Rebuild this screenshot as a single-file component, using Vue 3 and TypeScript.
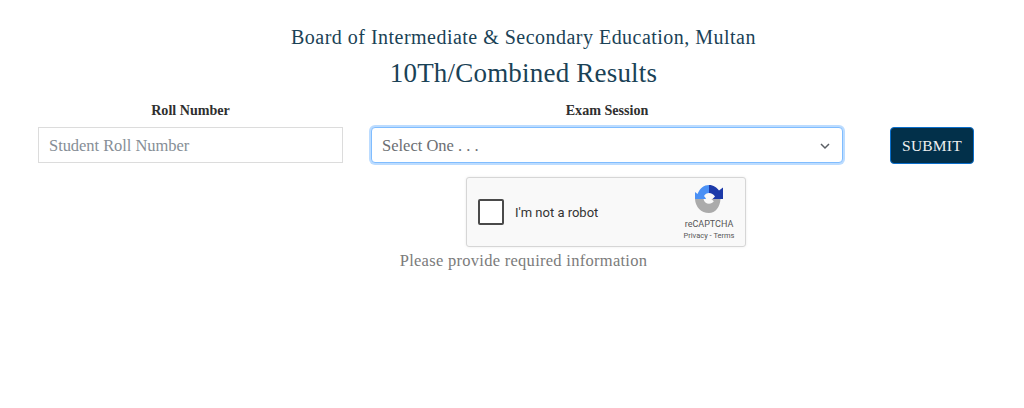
<script setup lang="ts">
const title: string = 'Board of Intermediate & Secondary Education, Multan'
const subtitle: string = '10Th/Combined Results'
</script>

<template>
  <main class="page">
    <header class="head">
      <div class="title">{{ title }}</div>
      <h1 class="subtitle">{{ subtitle }}</h1>
    </header>
    <form class="row" @submit.prevent>
      <div class="col roll">
        <label class="label">Roll Number</label>
        <div class="input placeholder">Student Roll Number</div>
      </div>
      <div class="col session">
        <label class="label">Exam Session</label>
        <div class="input select">
          <span>Select One . . .</span>
          <svg class="chev" width="10" height="7" viewBox="0 0 10 7"><path d="M1 1l4 4 4-4" fill="none" stroke="#5a5f64" stroke-width="1.500" /></svg>
        </div>
      </div>
      <button class="submit" type="submit">SUBMIT</button>
    </form>
    <div class="captcha-wrap">
      <div class="captcha">
        <div class="check"></div>
        <div class="robot">I'm not a robot</div>
        <div class="brand">
          <svg class="logo" width="30" height="30" viewBox="0 0 30 30">
            <path d="M1 15V8l2.500 2C6 4 10 1 15 1v8c-2 0-4 1-5 3l2 2.500-.5.500z" fill="#4a90f5" />
            <path d="M15 1c4.500 0 8 2.500 10 5.500l4-3V15H18.500l2.500-2.500C19.500 10.500 17.500 9 15 9z" fill="#1c3aa9" />
            <path d="M1 15h8.500c.5 2.800 2.800 4.800 5.500 4.800 2.200 0 3.800-1 4.800-2.500L17.300 15H26.500c-.5 8-5 14-11.500 14C7 29 1.500 23 1 15z" fill="#ababab" />
          </svg>
          <div class="rc">reCAPTCHA</div>
          <div class="terms">Privacy - Terms</div>
        </div>
      </div>
    </div>
    <p class="notice">Please provide required information</p>
  </main>
</template>

<style scoped>
.page {
  width: 1024px;
  height: 408px;
  box-sizing: border-box;
  background: #fff;
  padding-top: 25px;
  font-family: "Liberation Serif", "Times New Roman", serif;
  overflow: hidden;
}
.head {
  padding-left: 23px;
  text-align: center;
  color: #1a4256;
}
.title {
  font-size: 20px;
  line-height: 24px;
  letter-spacing: 0.48px;
}
.subtitle {
  margin: 8px 0 0;
  font-size: 27px;
  line-height: 32px;
  font-weight: 400;
  letter-spacing: 0.2px;
}
.row {
  display: flex;
  align-items: flex-start;
  margin-top: 12px;
  padding-left: 38px;
}
.col {
  display: flex;
  flex-direction: column;
}
.roll { width: 305px; }
.session { width: 472px; margin-left: 28px; }
.label {
  height: 26px;
  line-height: 18px;
  text-align: center;
  font-size: 14.1px;
  font-weight: 700;
  color: #2f2f2f;
}
.input {
  box-sizing: border-box;
  height: 36px;
  padding-top: 2px;
  display: flex;
  align-items: center;
  font-size: 16.500px;
  background: #fff;
}
.placeholder {
  padding-left: 10px;
  border: 1px solid #dcdcdc;
  color: #868e96;
  letter-spacing: -0.05px;
}
.select {
  justify-content: space-between;
  padding-right: 12px;
  padding-left: 10px;
  border: 1px solid #80bdff;
  border-radius: 4px;
  box-shadow: 0 0 0 2px #bcdcff;
  color: #6c6f73;
}
.submit {
  box-sizing: border-box;
  width: 84px;
  height: 37px;
  margin-top: 26px;
  margin-left: 47px;
  background: #02304a;
  border: 1px solid #0a6ecb;
  border-radius: 4px;
  color: #f0f0f0;
  font-family: inherit;
  font-size: 15.500px;
  letter-spacing: 0.2px;
  padding: 0;
}
.captcha-wrap {
  display: flex;
  margin-top: 13px;
  padding-left: 466px;
}
.captcha {
  box-sizing: border-box;
  width: 280px;
  height: 70px;
  display: flex;
  align-items: center;
  background: #f9f9f9;
  border: 1px solid #d6d6d6;
  border-radius: 3px;
  box-shadow: 0 0 3px rgba(0, 0, 0, 0.08);
  font-family: Roboto, "Liberation Sans", sans-serif;
}
.check {
  box-sizing: border-box;
  width: 26px;
  height: 26px;
  margin-left: 11px;
  background: #fff;
  border: 2px solid #4a4a4a;
  border-radius: 2px;
}
.robot {
  margin-left: 11px;
  font-size: 13px;
  color: #333;
}
.brand {
  margin-left: auto;
  width: 56px;
  margin-right: 8px;
  display: flex;
  flex-direction: column;
  align-items: center;
  color: #555;
}
.logo { margin-bottom: 4px; margin-top: 2px; }
.rc { font-size: 9px; line-height: 12px; }
.terms { font-size: 7.500px; line-height: 12px; white-space: nowrap; }
.notice {
  margin: 3px 0 0;
  padding-left: 23px;
  text-align: center;
  font-size: 16.500px;
  line-height: 22px;
  letter-spacing: 0.28px;
  color: #7b7b7b;
}
</style>
